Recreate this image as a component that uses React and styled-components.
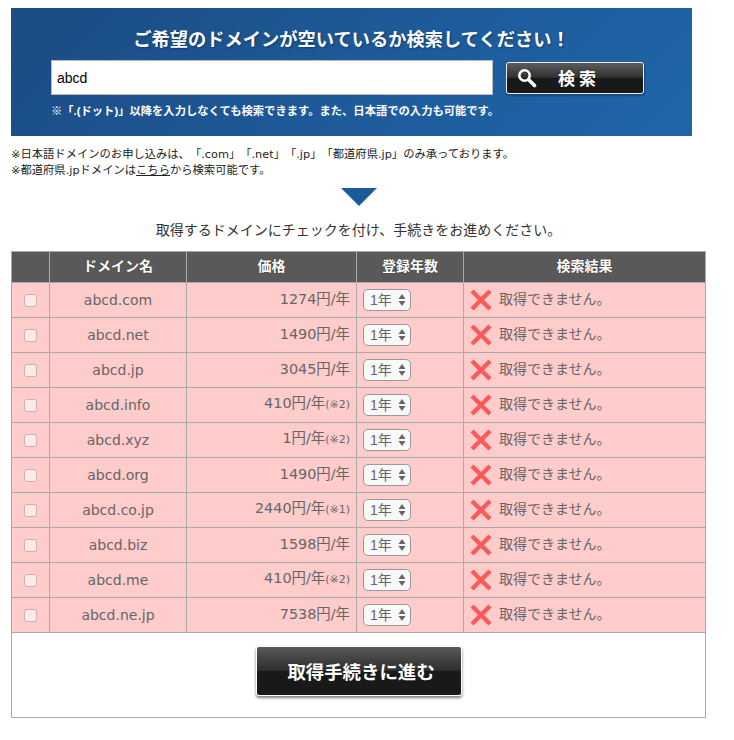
import styled, { createGlobalStyle } from 'styled-components';

const GlobalStyle = createGlobalStyle`
  html, body {
    margin: 0;
    padding: 0;
    background: #fff;
  }
  body {
    font-family: "Liberation Sans", "Noto Sans CJK JP", sans-serif;
    color: #222;
    text-spacing-trim: space-all;
  }
`;

const Page = styled.div`
  width: 695px;
  padding: 8px 0 0 11px;
`;

const Banner = styled.form`
  width: 681px;
  height: 128px;
  box-sizing: border-box;
  padding: 20px 40px 0;
  background: linear-gradient(135deg, #1b4b83 0%, #1e5b9b 55%, #1f66a9 100%);
  color: #fff;
`;

const BannerTitle = styled.h1`
  margin: 0;
  height: 32px;
  font-size: 18.25px;
  line-height: 24px;
  font-weight: 700;
  text-align: center;
  text-shadow: 1px 1px 2px #123a66;
`;

const SearchRow = styled.div`
  display: flex;
  align-items: center;
  gap: 13px;
`;

const SearchInput = styled.input`
  width: 442px;
  height: 35px;
  box-sizing: border-box;
  padding: 0 5px;
  border: 1px solid #bbb;
  border-radius: 0;
  background: #fff;
  color: #000;
  font-family: "Liberation Sans", sans-serif;
  font-size: 14px;
`;

const SearchButton = styled.button`
  width: 138px;
  height: 32px;
  box-sizing: border-box;
  display: flex;
  align-items: center;
  padding: 0 0 0 10px;
  border: 1px solid #e8eef4;
  border-radius: 3px;
  background: linear-gradient(#5c5c5c 0%, #2f2f2f 50%, #191919 50%, #191919 100%);
  box-shadow: 1px 2px 2px rgba(10, 40, 80, 0.45);
  color: #fff;
  font-family: "Liberation Sans", "Noto Sans CJK JP", sans-serif;
  font-size: 17px;
  font-weight: 700;
  letter-spacing: 4px;
`;

const SearchLabel = styled.span`
  margin-left: 21px;
`;

const BannerNote = styled.p`
  margin: 8px 0 0;
  font-size: 11.3px;
  line-height: 16px;
  font-weight: 700;
`;

const Notes = styled.p`
  margin: 11px 0 0;
  font-family: "DejaVu Sans", "Noto Sans CJK JP", sans-serif;
  font-size: 11.3px;
  line-height: 16px;
  color: #222;

  a {
    color: inherit;
    text-decoration: underline;
  }
`;

const Arrow = styled.div`
  width: 0;
  height: 0;
  margin: 9px auto 0 330px;
  border-left: 18px solid transparent;
  border-right: 18px solid transparent;
  border-top: 18px solid #1d5a9b;
`;

const Lead = styled.p`
  margin: 14px 0 0;
  font-size: 14px;
  line-height: 20px;
  text-align: center;
  color: #333;
`;

const Table = styled.table`
  width: 694px;
  margin-top: 11px;
  border-collapse: collapse;
  table-layout: fixed;
  font-family: "DejaVu Sans", "Noto Sans CJK JP", sans-serif;
`;

const HeadCell = styled.th`
  box-sizing: border-box;
  width: ${(p) => p.$w}px;
  height: 31px;
  padding: 0 0 3px;
  border: 1px solid #aaa;
  background: #595959;
  color: #fff;
  font-family: "Liberation Sans", "Noto Sans CJK JP", sans-serif;
  font-size: 14px;
  line-height: 20px;
  font-weight: 700;
  text-shadow: 0 0 1px #222;
`;

const Cell = styled.td`
  box-sizing: border-box;
  height: 35px;
  padding: ${(p) => (p.$align === 'right' ? '0 6px 2px 0' : '0')};
  border: 1px solid #aaa;
  background: #fcc;
  color: #666;
  font-size: ${(p) => (p.$align === 'right' ? '14.4px' : '14px')};
  line-height: 20px;
  text-align: ${(p) => p.$align || 'center'};
  white-space: nowrap;
`;

const Check = styled.input`
  display: block;
  width: 13px;
  height: 13px;
  margin: 0 auto;
  box-sizing: border-box;
  appearance: none;
  border: 1px solid #c4b4b4;
  border-radius: 3px;
  background: rgba(255, 255, 255, 0.55);
`;

const Mark = styled.small`
  font-size: 11px;
`;

const SelectWrap = styled.div`
  position: relative;
  width: 48px;
  height: 22px;
  margin-left: 6px;
`;

const YearSelect = styled.select`
  width: 100%;
  height: 100%;
  box-sizing: border-box;
  padding: 0 0 0 6px;
  appearance: none;
  border: 1px solid #999;
  border-radius: 5px;
  background: #f8f8f8;
  color: #666;
  font-family: "Liberation Sans", "Noto Sans CJK JP", sans-serif;
  font-size: 14px;
`;

const SelectArrows = styled.svg`
  position: absolute;
  top: 5px;
  right: 5px;
  pointer-events: none;
`;

const Result = styled.div`
  display: flex;
  align-items: center;
  gap: 7px;
  padding-left: 6px;
  font-family: "Liberation Sans", "Noto Sans CJK JP", sans-serif;
`;

const ResultText = styled.span`
  padding-bottom: 2px;
`;

const FooterCell = styled.td`
  box-sizing: border-box;
  height: 85px;
  padding: 13px 0 0;
  vertical-align: top;
  border: 1px solid #aaa;
  background: #fff;
`;

const SubmitButton = styled.button`
  display: block;
  width: 206px;
  height: 50px;
  margin: 0 auto;
  padding: 0 0 0 5px;
  border: 1px solid #fff;
  border-radius: 3px;
  background: linear-gradient(#5a5a5a 0%, #2c2c2c 50%, #191919 50%, #191919 100%);
  box-shadow: 0 2px 3px rgba(0, 0, 0, 0.5);
  color: #fff;
  font-family: "Liberation Sans", "Noto Sans CJK JP", sans-serif;
  font-size: 18.4px;
  font-weight: 700;
`;

const rows = [
  ['abcd.com', '1274', ''],
  ['abcd.net', '1490', ''],
  ['abcd.jp', '3045', ''],
  ['abcd.info', '410', '(※2)'],
  ['abcd.xyz', '1', '(※2)'],
  ['abcd.org', '1490', ''],
  ['abcd.co.jp', '2440', '(※1)'],
  ['abcd.biz', '1598', ''],
  ['abcd.me', '410', '(※2)'],
  ['abcd.ne.jp', '7538', ''],
];

const SearchIcon = () => (
  <svg width="20" height="20" viewBox="0 0 20 20" fill="none" stroke="#fff">
    <circle cx="7.5" cy="7.5" r="5.2" strokeWidth="2.6" />
    <path d="M11.5 11.5 L17.5 17.5" strokeWidth="3.6" strokeLinecap="round" />
  </svg>
);

const CrossIcon = () => (
  <svg width="22" height="22" viewBox="0 0 22 22" stroke="#fb5a5a" strokeWidth="4.4">
    <path d="M2 2 L20 20 M20 2 L2 20" />
  </svg>
);

export default function App() {
  return (
    <Page>
      <GlobalStyle />
      <Banner>
        <BannerTitle>ご希望のドメインが空いているか検索してください！</BannerTitle>
        <SearchRow>
          <SearchInput defaultValue="abcd" />
          <SearchButton type="button">
            <SearchIcon />
            <SearchLabel>検索</SearchLabel>
          </SearchButton>
        </SearchRow>
        <BannerNote>※「.(ドット)」以降を入力しなくても検索できます。また、日本語での入力も可能です。</BannerNote>
      </Banner>
      <Notes>
        ※日本語ドメインのお申し込みは、「.com」「.net」「.jp」「都道府県.jp」のみ承っております。
        <br />
        ※都道府県.jpドメインは<a href="#">こちら</a>から検索可能です。
      </Notes>
      <Arrow />
      <Lead>取得するドメインにチェックを付け、手続きをお進めください。</Lead>
      <Table>
        <thead>
          <tr>
            <HeadCell $w={38} />
            <HeadCell $w={137}>ドメイン名</HeadCell>
            <HeadCell $w={170}>価格</HeadCell>
            <HeadCell $w={107}>登録年数</HeadCell>
            <HeadCell $w={242}>検索結果</HeadCell>
          </tr>
        </thead>
        <tbody>
          {rows.map(([domain, price, mark]) => (
            <tr key={domain}>
              <Cell>
                <Check type="checkbox" disabled />
              </Cell>
              <Cell>{domain}</Cell>
              <Cell $align="right">
                {price}円/年
                {mark && <Mark>{mark}</Mark>}
              </Cell>
              <Cell $align="left">
                <SelectWrap>
                  <YearSelect defaultValue="1">
                    <option value="1">1年</option>
                  </YearSelect>
                  <SelectArrows width="8" height="12" viewBox="0 0 8 12" fill="#666">
                    <path d="M4 0 L7.5 5 H0.5 Z M4 12 L0.5 7 H7.5 Z" />
                  </SelectArrows>
                </SelectWrap>
              </Cell>
              <Cell $align="left">
                <Result>
                  <CrossIcon />
                  <ResultText>取得できません。</ResultText>
                </Result>
              </Cell>
            </tr>
          ))}
          <tr>
            <FooterCell colSpan={5}>
              <SubmitButton type="button">取得手続きに進む</SubmitButton>
            </FooterCell>
          </tr>
        </tbody>
      </Table>
    </Page>
  );
}
